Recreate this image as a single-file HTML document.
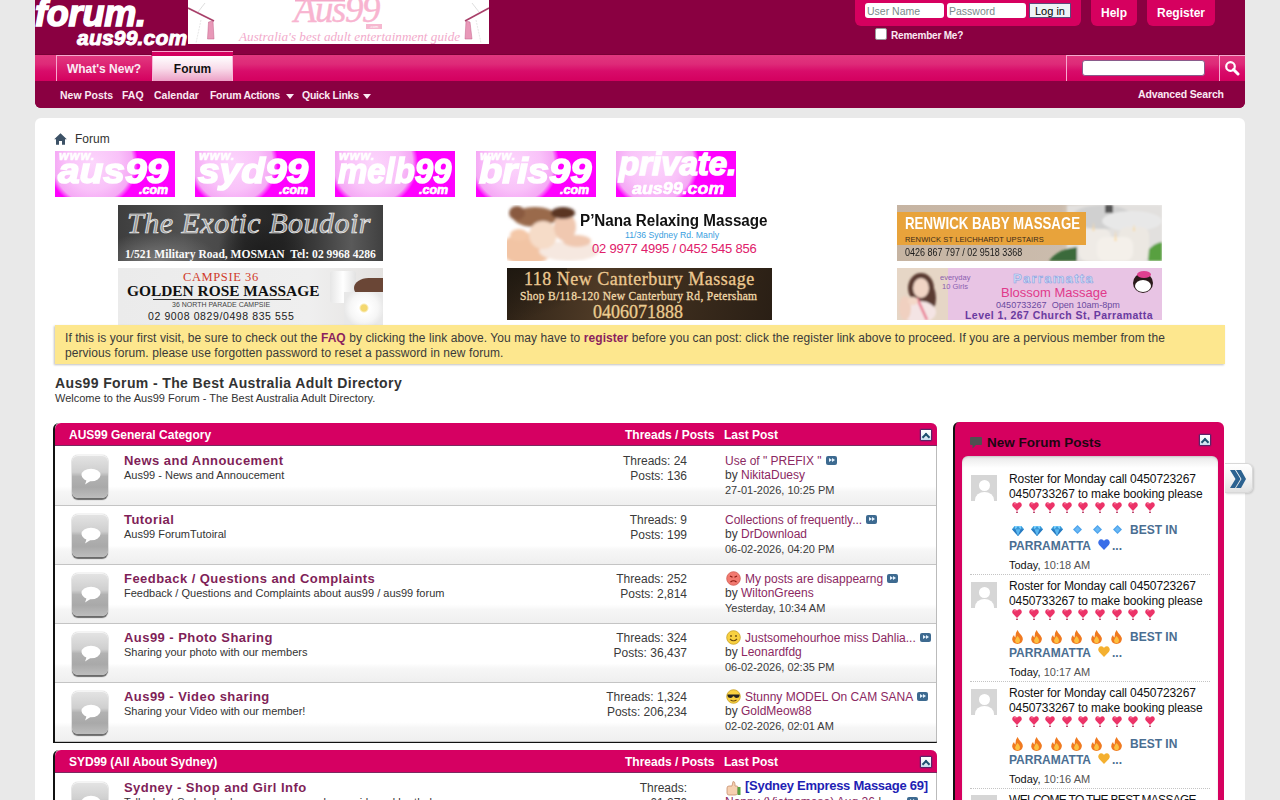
<!DOCTYPE html>
<html><head><meta charset="utf-8">
<style>
*{box-sizing:border-box;margin:0;padding:0}
html,body{width:1280px;height:800px;overflow:hidden;background:#e9e9e9;font-family:"Liberation Sans",sans-serif;color:#333}
.a{position:absolute;white-space:nowrap}
#hdr{position:absolute;left:35px;top:0;width:1210px;height:108px;background:#8a0041;border-radius:0 0 6px 6px}
#navbar{position:absolute;left:35px;top:55px;width:1210px;height:26px;background:linear-gradient(#e1377f 0%,#de2a78 35%,#d80c6a 62%,#d4005f 100%);box-shadow:0 -1px 0 #7a0036}
#sub{position:absolute;left:35px;top:81px;width:1210px;height:27px;background:#8a0041;border-radius:0 0 6px 6px}
.logo1{left:35px;top:-7px;font:italic bold 36px "Liberation Sans";color:#fff;letter-spacing:-0.2px;-webkit-text-stroke:1.6px #fff}
.logo2{left:77px;top:26px;font:italic bold 21px "Liberation Sans";color:#fff;letter-spacing:0.2px;-webkit-text-stroke:1px #fff}
#banner{position:absolute;left:188px;top:0;width:301px;height:44px;background:#fff}
.pinkbox{position:absolute;background:#d6005f;border-radius:0 0 6px 6px}
.inp{position:absolute;background:#fff;border-radius:3px;font:10.5px "Liberation Sans";color:#7a8a8a;padding:2px 0 0 2px;line-height:13px}
.hbtn{position:absolute;color:#fff;font:bold 12px "Liberation Sans";text-align:center}
.nav2{font:bold 10.5px "Liberation Sans";color:#fbe9f3}
.tri{display:inline-block;width:0;height:0;border-left:4px solid transparent;border-right:4px solid transparent;border-top:5px solid #fbe9f3;vertical-align:middle;margin-left:5px}
#content{position:absolute;left:35px;top:118px;width:1210px;height:700px;background:#fff;border-radius:6px}
.bn{position:absolute;top:151px;width:120px;height:46px;background:radial-gradient(circle 45px at 38px 12px,#fcd6fc 0%,#f9c2f9 60%,#f5a8f5 88%,#f0f 100%);overflow:hidden;color:#fff;font-family:"Liberation Sans";font-style:italic;font-weight:bold}
.bn span{position:absolute;white-space:nowrap;transform-origin:0 0}
.bn .w{left:4px;top:-2px;font-size:12.5px;letter-spacing:1px;-webkit-text-stroke:0.6px #fff}
.bn .b{left:3px;top:0px;font-size:35px;-webkit-text-stroke:1.6px #fff}
.bn .c{left:84px;top:32px;font-size:12.5px;-webkit-text-stroke:0.7px #fff}
.ad{position:absolute;width:265px;overflow:hidden}
.ad div{position:absolute;white-space:nowrap}

.cat{position:absolute;left:53px;width:884px;background:#fff;border-left:2px solid #111;border-right:1px solid #bbb;border-bottom:2px solid #111;border-radius:6px 6px 0 0;box-shadow:0 0 0 0 #000}
.cathd{position:absolute;left:55px;width:882px;height:23px;background:#d60062;border-radius:6px 6px 0 0;border-bottom:1px solid #7a2a60}
.cathd .t{position:absolute;top:5px;font:bold 12px "Liberation Sans";color:#fff}
.col{position:absolute;width:12px;height:12px;border:1px solid #5a2468;background:linear-gradient(#fff,#eef4f8 55%,#c4dcee);border-radius:1px;box-shadow:0 0 0 0.5px rgba(90,36,104,0.5)}
.col:after{content:"";position:absolute;left:0.5px;top:3px;width:4px;height:4px;border-left:2px solid #1e5070;border-top:2px solid #1e5070;transform:rotate(45deg);transform-origin:center;margin-left:1px;margin-top:1px}
.row{position:absolute;left:55px;width:881px;height:59px;background:linear-gradient(#fff 0,#fff 68%,#f6f6f6 77%,#efefef 100%);border-bottom:1px solid #c4c4c4}
.ficon{position:absolute;left:17px;top:8px;width:36px;height:43px;border-radius:6px;background:linear-gradient(#e4e4e4 0,#cfcfcf 40%,#b2b2b2 50%,#a9a9a9 75%,#bdbdbd 100%);box-shadow:inset 0 1px 0 rgba(255,255,255,0.6),0 1.5px 1px #6a6a6a,0 0 1px #888}
.ftitle{position:absolute;left:69px;top:6px;font:bold 13px "Liberation Sans";color:#7f1f58;letter-spacing:0.45px}
.fdesc{position:absolute;left:69px;top:22px;font:11px "Liberation Sans";color:#333}
.stat{position:absolute;right:249px;font:12px "Liberation Sans";color:#3a3a3a;text-align:right}
.lp{position:absolute;left:670px;font:12px "Liberation Sans";color:#3a3a3a}
.lp a{color:#8b2862;text-decoration:none}
.lp .d{font-size:11px;color:#333}
.go{display:inline-block;width:11px;height:9px;background:#3d6a90;border-radius:2px;vertical-align:0px;margin-left:4px;position:relative}
.go:before,.go:after{content:"";position:absolute;top:2px;width:0;height:0;border-top:2.5px solid transparent;border-bottom:2.5px solid transparent;border-left:3px solid #e8f4ff}
.go:before{left:3px}.go:after{left:6px}

#sb{position:absolute;left:953px;top:422px;width:271px;height:400px;background:#d6005f;border-left:2px solid #111;border-radius:6px 6px 0 0}
#sbin{position:absolute;left:962px;top:456px;width:256px;height:400px;background:linear-gradient(#e8e8e8 0,#fff 12px);border-radius:6px 6px 0 0;box-shadow:inset 0 1px 2px rgba(0,0,0,0.15)}
.av{position:absolute;left:971px;width:26px;height:26px;background:#d6d6d6;overflow:hidden}
.av:before{content:"";position:absolute;left:8px;top:5px;width:11px;height:11px;border-radius:50%;background:#fff}
.av:after{content:"";position:absolute;left:4px;top:17px;width:19px;height:16px;border-radius:50% 50% 0 0;background:#fff}
.sbt{position:absolute;left:1009px;font:12px "Liberation Sans";color:#111;letter-spacing:-0.1px;white-space:nowrap}
.sbb{position:absolute;left:1009px;font:bold 12px "Liberation Sans";color:#4a6e92;white-space:nowrap}
.sbd{position:absolute;left:1009px;font:11px "Liberation Sans";color:#111;white-space:nowrap}
.sbd span{color:#555}
.sep{position:absolute;left:970px;width:240px;height:1px;border-top:1px dotted #c4c4c4}
.emo{position:absolute}
</style></head>
<body>
<!-- HEADER -->
<div id="hdr"></div>
<div class="a logo1">forum.</div>
<div class="a logo2">aus99.com</div>
<div id="banner"><svg width="301" height="44" style="position:absolute;left:0;top:0">
<path d="M0 8 L26 21" stroke="#a8406a" stroke-width="1.6"/><path d="M10 12 L17 3" stroke="#bbb" stroke-width="0.5"/><path d="M13 20 L8 43" stroke="#ccc" stroke-width="0.5" stroke-dasharray="2 1"/><path d="M20.5 22 L25 21 L26 39 L19.5 39 Z" fill="#e898b8" stroke="#c06088" stroke-width="0.5"/>
<path d="M301 8 L277 21" stroke="#a8406a" stroke-width="1.6"/><path d="M291 12 L284 3" stroke="#bbb" stroke-width="0.5"/><path d="M288 20 L293 43" stroke="#ccc" stroke-width="0.5" stroke-dasharray="2 1"/><path d="M278 21 L282 22 L284 39 L277 39 Z" fill="#e898b8" stroke="#c06088" stroke-width="0.5"/>
<rect x="107" y="0" width="50" height="1.5" fill="#f4a8c8"/>
</svg>
<div style="position:absolute;left:106px;top:-12px;font:italic 37px 'Liberation Serif';color:#f8b4d0;letter-spacing:-1.5px;-webkit-text-stroke:0.4px #f8b4d0">Aus99</div>
<div style="position:absolute;left:178px;top:24px;width:16px;height:5px;background:#f6b8d0;font:4px 'Liberation Sans';color:#fff;text-align:center;line-height:5px">.com</div>
<div style="position:absolute;left:51px;top:29px;font:italic 13.2px 'Liberation Serif';color:#f2aacb">Australia's best adult entertainment guide</div>
</div>

<div class="pinkbox" style="left:855px;top:0;width:226px;height:26px"></div>
<div class="inp" style="left:865px;top:3px;width:79px;height:15px">User Name</div>
<div class="inp" style="left:947px;top:3px;width:79px;height:15px">Password</div>
<div class="a" style="left:1029px;top:3px;width:42px;height:15px;background:#eef2f5;border:1px solid #5a4a7a;font:11px 'Liberation Sans';color:#000;text-align:center;line-height:14px">Log in</div>
<div class="a" style="left:875px;top:28px;width:12px;height:12px;background:#fff;border:1px solid #999;border-radius:2px"></div>
<div class="a" style="left:891px;top:30px;font:bold 10px 'Liberation Sans';color:#fbe9f3;letter-spacing:-0.2px">Remember Me?</div>
<div class="pinkbox hbtn" style="left:1091px;top:0;width:46px;height:26px;line-height:26px">Help</div>
<div class="pinkbox hbtn" style="left:1147px;top:0;width:68px;height:26px;line-height:26px">Register</div>

<div id="navbar"></div>
<div id="sub"></div>
<div class="a" style="left:56px;top:55px;width:95px;height:26px;background:linear-gradient(#e2387f,#d4005f);border-top:1px solid #f7a8cf;border-left:1px solid #f7a8cf;font:bold 12px 'Liberation Sans';color:#fbeaf3;text-align:center;line-height:26px">What's New?</div>
<div class="a" style="left:152px;top:51px;width:81px;height:30px;background:#d4005f;border-top:1px solid #f7a8cf"></div>
<div class="a" style="left:152px;top:56px;width:81px;height:25px;background:linear-gradient(#fff,#f9dcea 50%,#eca0c6);font:bold 12px 'Liberation Sans';color:#111;text-align:center;line-height:26px;border-left:1px solid #f7b8d8;border-right:1px solid #f7b8d8">Forum</div>

<div class="a" style="left:1066px;top:55px;width:152px;height:26px;border-left:1px solid #f7a8cf;border-top:1px solid #f7a8cf"></div>
<div class="a" style="left:1082px;top:60px;width:123px;height:16px;background:#fff;border-radius:3px;border:1px solid #8a5a8a"></div>
<div class="a" style="left:1219px;top:55px;width:26px;height:26px;border-left:1px solid #f7a8cf;border-top:1px solid #f7a8cf"></div>
<svg class="a" style="left:1224px;top:60px" width="16" height="16" viewBox="0 0 16 16"><circle cx="6.5" cy="6.5" r="4.3" stroke="#fff" stroke-width="2.2" fill="none"/><path d="M9.5 9.5 L14 14" stroke="#fff" stroke-width="3" stroke-linecap="round"/></svg>

<div class="a nav2" style="left:60px;top:89px">New Posts</div>
<div class="a nav2" style="left:122px;top:89px">FAQ</div>
<div class="a nav2" style="left:154px;top:89px">Calendar</div>
<div class="a nav2" style="left:210px;top:89px;letter-spacing:-0.3px">Forum Actions</div><span class="a tri" style="left:281px;top:94px"></span>
<div class="a nav2" style="left:302px;top:89px;letter-spacing:-0.25px">Quick Links</div><span class="a tri" style="left:358px;top:94px"></span>
<div class="a nav2" style="left:1138px;top:88px;letter-spacing:-0.15px">Advanced Search</div>

<!-- CONTENT -->
<div id="content"></div>
<svg class="a" style="left:54px;top:133px" width="13" height="12" viewBox="0 0 13 12"><path d="M6.5 0.3 L12.8 6.2 L11 6.2 L11 11.8 L8 11.8 L8 8 L5 8 L5 11.8 L2 11.8 L2 6.2 L0.2 6.2 Z" fill="#3d5266"/></svg>
<div class="a" style="left:75px;top:132px;font:12px 'Liberation Sans';color:#333">Forum</div>

<div class="bn" style="left:55px"><span class="w">www.</span><span class="b" style="transform:scaleX(1.11)">aus99</span><span class="c">.com</span></div>
<div class="bn" style="left:195px"><span class="w">www.</span><span class="b" style="transform:scaleX(1.11)">syd99</span><span class="c">.com</span></div>
<div class="bn" style="left:335px"><span class="w">www.</span><span class="b" style="transform:scaleX(0.94)">melb99</span><span class="c">.com</span></div>
<div class="bn" style="left:476px"><span class="w">www.</span><span class="b" style="transform:scaleX(1.09)">bris99</span><span class="c">.com</span></div>
<div class="bn" style="left:616px"><span class="b" style="top:-6px;left:3px;font-size:33px;transform:scaleX(1.0)">private.</span><span class="c" style="top:28px;left:16px;font-size:17px;transform:scaleX(1.05)">aus99.com</span></div>

<!-- ADS -->
<div class="ad" style="left:118px;top:205px;height:56px;background:radial-gradient(ellipse 60px 30px at 40px 56px,#7a7a7a,rgba(90,90,90,0) 100%),linear-gradient(90deg,#3e3e3e 0%,#505050 25%,#4a4a4a 38%,#2c2c2c 48%,#262626 62%,#3a3a3a 74%,#5a5a5a 88%,#404040 100%)">
 <div style="left:100px;top:10px;width:90px;height:46px;background:radial-gradient(ellipse 45px 30px at 45px 35px,#1e1e1e,rgba(30,30,30,0) 100%)"></div>
 <div style="left:9px;top:1px;font:italic 30px 'Liberation Serif';color:rgba(220,220,220,0.55);letter-spacing:0.5px;-webkit-text-stroke:0.7px #f0f0f0">The Exotic Boudoir</div>
 <div style="left:7px;top:43px;font:bold 11.6px 'Liberation Serif';color:#fafafa">1/521 Military Road, MOSMAN&nbsp; Tel: 02 9968 4286</div>
</div>
<div class="ad" style="left:507px;top:205px;height:56px;background:#fff">
 <svg style="position:absolute;left:0;top:0" width="100" height="56"><defs><filter id="bl" x="-20%" y="-20%" width="140%" height="140%"><feGaussianBlur stdDeviation="1.6"/></filter></defs>
 <g filter="url(#bl)">
 <ellipse cx="20" cy="44" rx="26" ry="16" fill="#f2c4a4"/>
 <ellipse cx="62" cy="46" rx="30" ry="10" fill="#f6e8e0"/>
 <ellipse cx="70" cy="36" rx="14" ry="6" fill="#f0c8b0"/>
 <ellipse cx="28" cy="12" rx="22" ry="10" fill="#9a6a4c"/>
 <ellipse cx="10" cy="8" rx="8" ry="7" fill="#8a5a40"/>
 <ellipse cx="36" cy="30" rx="14" ry="14" fill="#f6dcc8"/>
 <ellipse cx="58" cy="22" rx="11" ry="14" fill="#f0c8b0"/>
 <ellipse cx="56" cy="8" rx="12" ry="6" fill="#5a3424"/>
 <ellipse cx="12" cy="30" rx="9" ry="6" fill="#f4c8a8"/>
 </g></svg>
 <div style="left:73px;top:7px;font:bold 16px 'Liberation Sans';color:#111;transform:scaleX(0.95);transform-origin:0 0">P&#8217;Nana Relaxing Massage</div>
 <div style="left:118px;top:25px;font:8.7px 'Liberation Sans';color:#3aa0e0">11/36 Sydney Rd. Manly</div>
 <div style="left:85px;top:36px;font:13px 'Liberation Sans';color:#e0206a;letter-spacing:-0.2px">02 9977 4995 / 0452 545 856</div>
</div>
<div class="ad" style="left:897px;top:205px;height:56px;background:linear-gradient(90deg,#c6b4a2 0,#cbbcad 62%,#e8e4e0 74%,#f0eeec 100%)">
 <svg style="position:absolute;left:0;top:0" width="265" height="56"><defs><filter id="bl3" x="-20%" y="-20%" width="140%" height="140%"><feGaussianBlur stdDeviation="1"/></filter></defs>
 <g filter="url(#bl3)">
 <rect x="170" y="0" width="95" height="56" fill="#e2e0de"/>
 <ellipse cx="205" cy="12" rx="30" ry="12" fill="#d0d0d0"/>
 <rect x="208" y="0" width="8" height="8" fill="#555"/>
 <ellipse cx="235" cy="16" rx="30" ry="10" fill="#e8e8e8"/>
 <path d="M152 56 Q160 44 180 42 L180 56 Z" fill="#3a6a3a"/>
 <rect x="182" y="24" width="32" height="32" rx="8" fill="#efebe6"/>
 <rect x="222" y="22" width="30" height="34" rx="8" fill="#ece8e2"/>
 <rect x="200" y="32" width="36" height="24" rx="8" fill="#f4f0ea"/>
 <path d="M251 56 L252 44 Q258 38 265 37 L265 56 Z" fill="#58a040"/>
 <path d="M195.5 26 L196.5 17 L197.5 26 Z" fill="#f8d8a0"/>
 <path d="M217.5 36 L218.5 25 L219.5 36 Z" fill="#f8d8a0"/>
 <path d="M236 26 L237 19 L238 26 Z" fill="#f8d8a0"/>
 </g></svg>
 <div style="left:0;top:7px;width:189px;height:33px;background:#e8a33b"></div>
 <div style="left:8px;top:9px;font:bold 17px 'Liberation Sans';color:#fff;transform:scaleX(0.78);transform-origin:0 0">RENWICK BABY MASSAGE</div>
 <div style="left:8px;top:30px;font:7.5px 'Liberation Sans';color:#3a2a1a;letter-spacing:0.1px">RENWICK ST LEICHHARDT UPSTAIRS</div>
 <div style="left:8px;top:41px;font:11.5px 'Liberation Sans';color:#1a1a1a;transform:scaleX(0.78);transform-origin:0 0">0426 867 797 / 02 9518 3368</div>
</div>
<div class="ad" style="left:118px;top:268px;height:57px;background:linear-gradient(90deg,#ebebeb,#efefef 72%,#e4e2e0)">
 <div style="left:212px;top:3px;width:26px;height:32px;background:linear-gradient(90deg,#e6e6e6,#fff 50%,#e2e2e2);border-radius:3px"></div>
 <div style="left:236px;top:10px;width:29px;height:20px;background:#6a4636;border-radius:50% 0 0 50%"></div>
 <div style="left:226px;top:24px;width:39px;height:33px;background:radial-gradient(circle at 20px 16px,#f4d870 0,#f4d870 3px,#fff 5px,#f6f6f6 14px,#e8e8e8 20px)"></div>
 <div style="left:65px;top:2px;font:12.5px 'Liberation Serif';color:#d03a2a;letter-spacing:0.6px">CAMPSIE 36</div>
 <div style="left:9px;top:14px;font:bold 15.4px 'Liberation Serif';color:#111">GOLDEN ROSE MASSAGE</div>
 <div style="left:35px;top:31px;width:138px;height:1px;background:#333"></div>
 <div style="left:54px;top:33px;font:7px 'Liberation Sans';color:#444">36 NORTH PARADE CAMPSIE</div>
 <div style="left:30px;top:42px;font:10.5px 'Liberation Sans';color:#222;letter-spacing:0.6px">02 9008 0829/0498 835 555</div>
</div>
<div class="ad" style="left:507px;top:268px;height:52px;background:linear-gradient(100deg,#2e2216,#4e3a26 35%,#3e2e1e 60%,#2a1f15)">
 <div style="left:0;top:0;width:60px;height:52px;background:linear-gradient(160deg,#1e1810,rgba(30,24,16,0) 80%)"></div>
 <div style="left:17px;top:1px;font:18px 'Liberation Serif';color:#ecc890;letter-spacing:0.5px;-webkit-text-stroke:0.3px #ecc890">118 New Canterbury Massage</div>
 <div style="left:13px;top:22px;font:11.5px 'Liberation Serif';color:#f0d8a8;letter-spacing:0.3px;-webkit-text-stroke:0.3px #f0d8a8">Shop B/118-120 New Canterbury Rd, Petersham</div>
 <div style="left:86px;top:34px;font:18px 'Liberation Serif';color:#eccc90;-webkit-text-stroke:0.3px #eccc90">0406071888</div>
</div>
<div class="ad" style="left:897px;top:268px;height:52px;background:#e8c4e4">
 <svg style="position:absolute;left:0;top:0" width="51" height="52"><defs><filter id="bl2" x="-20%" y="-20%" width="140%" height="140%"><feGaussianBlur stdDeviation="1.2"/></filter></defs>
 <rect width="51" height="52" fill="#e6d6c6"/>
 <g filter="url(#bl2)">
 <ellipse cx="24" cy="20" rx="13" ry="15" fill="#5a3a32"/>
 <ellipse cx="34" cy="30" rx="5" ry="12" fill="#5a3a32"/>
 <ellipse cx="24" cy="20" rx="8" ry="10" fill="#f0d4c4"/>
 <ellipse cx="22" cy="44" rx="17" ry="11" fill="#f4e4e4"/>
 <ellipse cx="8" cy="40" rx="6" ry="12" fill="#f0d0c0"/>
 <path d="M20 30 L30 52" stroke="#e87890" stroke-width="2.5"/>
 <ellipse cx="16" cy="33" rx="5" ry="4" fill="#f4d8c8"/>
 </g></svg>
 <div style="left:43px;top:5px;font:7.5px 'Liberation Sans';color:#8a60b0;line-height:9px">everyday<br>&nbsp;10 Girls</div>
 <div style="left:116px;top:3px;font:bold 13px 'Liberation Sans';color:#d4e4f8;-webkit-text-stroke:0.6px #8aa0e0;letter-spacing:1.3px">Parramatta</div>
 <div style="left:104px;top:17px;font:13px 'Liberation Sans';color:#e03a8a">Blossom Massage</div>
 <div style="left:99px;top:32px;font:9.1px 'Liberation Sans';color:#6a4aa0">0450733267&nbsp; Open 10am-8pm</div>
 <div style="left:68px;top:41px;font:bold 10.5px 'Liberation Sans';color:#6a3aa0;letter-spacing:0.45px">Level 1, 267 Church St, Parramatta</div>
 <div style="left:236px;top:5px;width:20px;height:20px;background:#2a1a1a;border-radius:50%"></div>
 <div style="left:238px;top:12px;width:16px;height:12px;background:#fff;border-radius:50%"></div>
 <div style="left:240px;top:3px;width:14px;height:7px;background:#e04090;border-radius:50%"></div>
</div>

<!-- NOTICE -->
<div class="a" style="left:55px;top:325px;width:1170px;height:39px;background:#fde78e;box-shadow:-1px 1px 2px rgba(0,0,0,0.25)"></div>
<div class="a" style="left:65px;top:331px;font:12px 'Liberation Sans';color:#3a3a3a;line-height:15px;letter-spacing:0.07px;white-space:normal;width:1150px">If this is your first visit, be sure to check out the <b style="color:#8b1f5e">FAQ</b> by clicking the link above. You may have to <b style="color:#8b1f5e">register</b> before you can post: click the register link above to proceed. If you are a pervious member from the<br>pervious forum. please use forgotten password to reset a password in new forum.</div>

<div class="a" style="left:55px;top:375px;font:bold 14px 'Liberation Sans';color:#333;letter-spacing:0.38px">Aus99 Forum - The Best Australia Adult Directory</div>
<div class="a" style="left:55px;top:392px;font:11px 'Liberation Sans';color:#333">Welcome to the Aus99 Forum - The Best Australia Adult Directory.</div>
<div class="cat" style="top:423px;height:320px"></div>
<div class="cathd" style="top:423px"><span class="t" style="left:14px">AUS99 General Category</span><span class="t" style="left:570px">Threads / Posts</span><span class="t" style="left:669px">Last Post</span><span class="col" style="left:865px;top:6px"></span></div>
<div class="row" style="top:447px">
 <div class="ficon"><svg style="position:absolute;left:9px;top:13px" width="20" height="17" viewBox="0 0 20 17"><ellipse cx="10" cy="7" rx="9.5" ry="6.3" fill="#fff"/><path d="M6 11 L4 16.5 L11 12 Z" fill="#fff"/></svg></div>
 <div class="ftitle">News and Annoucement</div><div class="fdesc">Aus99 - News and Annoucement</div>
 <div class="stat" style="top:7px">Threads: 24</div><div class="stat" style="top:22px">Posts: 136</div>
 <div class="lp" style="top:7px"><span style="position:relative;left:0px"><a>Use of &quot; PREFIX &quot;</a><span class="go"></span></span></div>
 <div class="lp" style="top:21px">by <a>NikitaDuesy</a></div>
 <div class="lp d" style="top:37px;font-size:11px">27-01-2026, 10:25 PM</div>
</div>
<div class="row" style="top:506px">
 <div class="ficon"><svg style="position:absolute;left:9px;top:13px" width="20" height="17" viewBox="0 0 20 17"><ellipse cx="10" cy="7" rx="9.5" ry="6.3" fill="#fff"/><path d="M6 11 L4 16.5 L11 12 Z" fill="#fff"/></svg></div>
 <div class="ftitle">Tutorial</div><div class="fdesc">Aus99 ForumTutoiral</div>
 <div class="stat" style="top:7px">Threads: 9</div><div class="stat" style="top:22px">Posts: 199</div>
 <div class="lp" style="top:7px"><span style="position:relative;left:0px"><a>Collections of frequently...</a><span class="go"></span></span></div>
 <div class="lp" style="top:21px">by <a>DrDownload</a></div>
 <div class="lp d" style="top:37px;font-size:11px">06-02-2026, 04:20 PM</div>
</div>
<div class="row" style="top:565px">
 <div class="ficon"><svg style="position:absolute;left:9px;top:13px" width="20" height="17" viewBox="0 0 20 17"><ellipse cx="10" cy="7" rx="9.5" ry="6.3" fill="#fff"/><path d="M6 11 L4 16.5 L11 12 Z" fill="#fff"/></svg></div>
 <div class="ftitle">Feedback / Questions and Complaints</div><div class="fdesc">Feedback / Questions and Complaints about aus99 / aus99 forum</div>
 <div class="stat" style="top:7px">Threads: 252</div><div class="stat" style="top:22px">Posts: 2,814</div>
 <div class="lp" style="top:7px"><span style="position:relative;left:20px"><svg style="position:absolute;left:-19px;top:-1px" width="15" height="15" viewBox="0 0 15 15"><circle cx="7.5" cy="7.5" r="6.8" fill="#f27a70" stroke="#d05a50" stroke-width="0.8"/><path d="M4 5 L6.5 6.2 M11 5 L8.5 6.2" stroke="#8a1a10" stroke-width="1.2"/><path d="M4.5 11 Q7.5 8.5 10.5 11" stroke="#8a1a10" stroke-width="1.1" fill="none"/></svg><a>My posts are disappearng</a><span class="go"></span></span></div>
 <div class="lp" style="top:21px">by <a>WiltonGreens</a></div>
 <div class="lp d" style="top:37px;font-size:11px">Yesterday, 10:34 AM</div>
</div>
<div class="row" style="top:624px">
 <div class="ficon"><svg style="position:absolute;left:9px;top:13px" width="20" height="17" viewBox="0 0 20 17"><ellipse cx="10" cy="7" rx="9.5" ry="6.3" fill="#fff"/><path d="M6 11 L4 16.5 L11 12 Z" fill="#fff"/></svg></div>
 <div class="ftitle">Aus99 - Photo Sharing</div><div class="fdesc">Sharing your photo with our members</div>
 <div class="stat" style="top:7px">Threads: 324</div><div class="stat" style="top:22px">Posts: 36,437</div>
 <div class="lp" style="top:7px"><span style="position:relative;left:20px"><svg style="position:absolute;left:-19px;top:-1px" width="15" height="15" viewBox="0 0 15 15"><circle cx="7.5" cy="7.5" r="6.8" fill="#f8d040" stroke="#c8a020" stroke-width="0.8"/><circle cx="5" cy="6" r="0.9" fill="#6a4a10"/><circle cx="10" cy="6" r="0.9" fill="#6a4a10"/><path d="M4 9 Q7.5 12.5 11 9" stroke="#6a4a10" stroke-width="1.1" fill="none"/></svg><a>Justsomehourhoe miss Dahlia...</a><span class="go"></span></span></div>
 <div class="lp" style="top:21px">by <a>Leonardfdg</a></div>
 <div class="lp d" style="top:37px;font-size:11px">06-02-2026, 02:35 PM</div>
</div>
<div class="row" style="top:683px">
 <div class="ficon"><svg style="position:absolute;left:9px;top:13px" width="20" height="17" viewBox="0 0 20 17"><ellipse cx="10" cy="7" rx="9.5" ry="6.3" fill="#fff"/><path d="M6 11 L4 16.5 L11 12 Z" fill="#fff"/></svg></div>
 <div class="ftitle">Aus99 - Video sharing</div><div class="fdesc">Sharing your Video with our member!</div>
 <div class="stat" style="top:7px">Threads: 1,324</div><div class="stat" style="top:22px">Posts: 206,234</div>
 <div class="lp" style="top:7px"><span style="position:relative;left:20px"><svg style="position:absolute;left:-19px;top:-1px" width="15" height="15" viewBox="0 0 15 15"><circle cx="7.5" cy="7.5" r="6.8" fill="#f8d040" stroke="#c8a020" stroke-width="0.8"/><path d="M1.5 5.5 H13.5 V7 Q13 9 10.5 9 Q8.5 9 8 7.2 H7 Q6.5 9 4.5 9 Q2 9 1.5 7 Z" fill="#222"/><path d="M4.5 11 Q7.5 13 10.5 11" stroke="#6a4a10" stroke-width="1.1" fill="none"/></svg><a>Stunny MODEL On CAM SANA</a><span class="go"></span></span></div>
 <div class="lp" style="top:21px">by <a>GoldMeow88</a></div>
 <div class="lp d" style="top:37px;font-size:11px">02-02-2026, 02:01 AM</div>
</div>
<div class="cat" style="top:750px;height:80px"></div>
<div class="cathd" style="top:750px"><span class="t" style="left:14px">SYD99 (All About Sydney)</span><span class="t" style="left:570px">Threads / Posts</span><span class="t" style="left:669px">Last Post</span><span class="col" style="left:865px;top:6px"></span></div>
<div class="row" style="top:774px">
 <div class="ficon"><svg style="position:absolute;left:9px;top:13px" width="20" height="17" viewBox="0 0 20 17"><ellipse cx="10" cy="7" rx="9.5" ry="6.3" fill="#fff"/><path d="M6 11 L4 16.5 L11 12 Z" fill="#fff"/></svg></div>
 <div class="ftitle">Sydney - Shop and Girl Info</div><div class="fdesc">Talk about Sydney's shops, massage parlours, girls and brothels</div>
 <div class="stat" style="top:7px">Threads:</div><div class="stat" style="top:22px">61,276</div>
 <div class="lp" style="top:4px"><svg style="position:absolute;left:0;top:2px" width="16" height="16" viewBox="0 0 16 16"><path d="M2 8 Q2 6 4 6 L7 6 L8 1.5 Q10 1.5 10 4 L10 6 L12 6 Q13 6 13 8 L12.5 13.5 Q12 15 10 15 L4 15 Q2 15 2 13 Z" fill="#f6d0b0" stroke="#c89070" stroke-width="0.8"/><rect x="12.5" y="7" width="3" height="8" fill="#5aa040"/></svg><span style="position:relative;left:20px;font:bold 13px 'Liberation Sans';color:#1e22b4;letter-spacing:-0.27px">[Sydney Empress Massage 69]</span></div>
 <div class="lp" style="top:21px"><a>Nanny (Vietnamese) Aug 26</a> | <a>...</a><span class="go" style="margin-left:12px"></span></div>
</div>
<svg width="0" height="0" style="position:absolute"><defs>
<symbol id="hrt" viewBox="0 0 10 11"><path d="M5 9 L1 4.8 Q-0.3 3.2 0.6 1.6 Q1.8 -0.2 3.6 0.6 Q4.5 1 5 1.8 Q5.5 1 6.4 0.6 Q8.2 -0.2 9.4 1.6 Q10.3 3.2 9 4.8 Z" fill="#ec3368"/><path d="M2 2 Q3 1.2 4 2" stroke="#ff8aa8" stroke-width="0.8" fill="none"/><rect x="4.2" y="9.6" width="1.6" height="1.4" fill="#b02050"/></symbol>
<symbol id="gem" viewBox="0 0 12 10"><path d="M2.5 0 H9.5 L12 3.2 L6 10 L0 3.2 Z" fill="#3a9ad8"/><path d="M0 3.2 H12 L6 10 Z" fill="#2a7ac0"/><path d="M3.5 3.2 L6 10 L8.5 3.2 Z" fill="#5ab8f0"/><path d="M2.5 0 L3.5 3.2 L6 0 L8.5 3.2 L9.5 0 Z" fill="#7ad0ff"/></symbol>
<symbol id="dia" viewBox="0 0 10 10"><path d="M5 0 L10 5 L5 10 L0 5 Z" fill="#4ea4ec"/><path d="M5 2 L8 5 L5 8 L2 5 Z" fill="#6ab8f4"/></symbol>
<symbol id="fire" viewBox="0 0 11 14"><path d="M5.5 0 Q7 3 9.5 5.5 Q11 7.5 10.8 9.5 Q10.3 13.5 5.5 14 Q0.7 13.5 0.2 9.5 Q0 7 2 5 Q2.5 7 3.5 7.5 Q3.2 3 5.5 0 Z" fill="#f07a20"/><path d="M5.5 6 Q7.5 8 8 10 Q8 13 5.5 13.2 Q3 13 3 10.5 Q3.5 8.5 5.5 6 Z" fill="#fcc040"/></symbol>
<symbol id="bhrt" viewBox="0 0 12 11"><path d="M6 11 L1.2 6 Q-0.5 3.8 0.8 1.8 Q2.2 -0.2 4.3 0.6 Q5.4 1 6 2 Q6.6 1 7.7 0.6 Q9.8 -0.2 11.2 1.8 Q12.5 3.8 10.8 6 Z" fill="#3a6ee8"/></symbol>
<symbol id="yhrt" viewBox="0 0 12 11"><path d="M6 11 L1.2 6 Q-0.5 3.8 0.8 1.8 Q2.2 -0.2 4.3 0.6 Q5.4 1 6 2 Q6.6 1 7.7 0.6 Q9.8 -0.2 11.2 1.8 Q12.5 3.8 10.8 6 Z" fill="#f4b030"/></symbol>
</defs></svg>
<div id="sb"></div>
<svg class="emo" style="left:970px;top:437px" width="12" height="12" viewBox="0 0 12 12"><path d="M1 0 H11 Q12 0 12 1 V7 Q12 8 11 8 H6 L2.5 11.5 V8 H1 Q0 8 0 7 V1 Q0 0 1 0 Z" fill="#505050"/></svg>
<div class="a" style="left:987px;top:435px;font:bold 13.5px 'Liberation Sans';color:#1e0612">New Forum Posts</div>
<span class="col" style="left:1199px;top:434px"></span>
<div id="sbin"></div>
<div class="a" style="left:1225px;top:463px;width:28px;height:30px;background:linear-gradient(#fff,#f4f4f4 50%,#e2e2e2);border:1px solid #d8d8d8;border-left:none;border-radius:0 6px 6px 0;box-shadow:1px 1px 2px rgba(0,0,0,0.15)"></div>
<svg class="emo" style="left:1229px;top:470px" width="17" height="18" viewBox="0 0 17 18"><path d="M1 0 H6 L11.5 9 L6 18 H1 L6.5 9 Z" fill="#2c6290"/><path d="M7 0 H12 L17 9 L12 18 H7 L12.5 9 Z" fill="#2c6290"/></svg>
<div class="av" style="top:475px"></div>
<div class="sbt" style="top:472px">Roster for Monday call 0450723267</div>
<div class="sbt" style="top:486.5px">0450733267 to make booking please</div>
<svg class="emo" style="left:1012.0px;top:502px" width="10" height="11"><use href="#hrt"/></svg><svg class="emo" style="left:1028.6px;top:502px" width="10" height="11"><use href="#hrt"/></svg><svg class="emo" style="left:1045.2px;top:502px" width="10" height="11"><use href="#hrt"/></svg><svg class="emo" style="left:1061.8px;top:502px" width="10" height="11"><use href="#hrt"/></svg><svg class="emo" style="left:1078.4px;top:502px" width="10" height="11"><use href="#hrt"/></svg><svg class="emo" style="left:1095.0px;top:502px" width="10" height="11"><use href="#hrt"/></svg><svg class="emo" style="left:1111.6px;top:502px" width="10" height="11"><use href="#hrt"/></svg><svg class="emo" style="left:1128.2px;top:502px" width="10" height="11"><use href="#hrt"/></svg><svg class="emo" style="left:1144.8px;top:502px" width="10" height="11"><use href="#hrt"/></svg>
<svg class="emo" style="left:1011.5px;top:526px" width="12" height="10"><use href="#gem"/></svg><svg class="emo" style="left:1031.4px;top:526px" width="12" height="10"><use href="#gem"/></svg><svg class="emo" style="left:1051.3px;top:526px" width="12" height="10"><use href="#gem"/></svg><svg class="emo" style="left:1073.0px;top:525px" width="9" height="9"><use href="#dia"/></svg><svg class="emo" style="left:1092.9px;top:525px" width="9" height="9"><use href="#dia"/></svg><svg class="emo" style="left:1112.8px;top:525px" width="9" height="9"><use href="#dia"/></svg><div class="sbb" style="top:522.5px;left:1130px">BEST IN</div>
<div class="sbb" style="top:538.5px">PARRAMATTA</div>
<svg class="emo" style="left:1098px;top:539px" width="12" height="11"><use href="#bhrt"/></svg><div class="sbb" style="top:538.5px;left:1112px">...</div>
<div class="sbd" style="top:558.5px">Today, <span>10:18 AM</span></div>
<div class="sep" style="top:574px"></div>
<div class="av" style="top:582px"></div>
<div class="sbt" style="top:579px">Roster for Monday call 0450723267</div>
<div class="sbt" style="top:593.5px">0450733267 to make booking please</div>
<svg class="emo" style="left:1012.0px;top:609px" width="10" height="11"><use href="#hrt"/></svg><svg class="emo" style="left:1028.6px;top:609px" width="10" height="11"><use href="#hrt"/></svg><svg class="emo" style="left:1045.2px;top:609px" width="10" height="11"><use href="#hrt"/></svg><svg class="emo" style="left:1061.8px;top:609px" width="10" height="11"><use href="#hrt"/></svg><svg class="emo" style="left:1078.4px;top:609px" width="10" height="11"><use href="#hrt"/></svg><svg class="emo" style="left:1095.0px;top:609px" width="10" height="11"><use href="#hrt"/></svg><svg class="emo" style="left:1111.6px;top:609px" width="10" height="11"><use href="#hrt"/></svg><svg class="emo" style="left:1128.2px;top:609px" width="10" height="11"><use href="#hrt"/></svg><svg class="emo" style="left:1144.8px;top:609px" width="10" height="11"><use href="#hrt"/></svg>
<svg class="emo" style="left:1011.5px;top:630px" width="11" height="14"><use href="#fire"/></svg><svg class="emo" style="left:1031.4px;top:630px" width="11" height="14"><use href="#fire"/></svg><svg class="emo" style="left:1051.3px;top:630px" width="11" height="14"><use href="#fire"/></svg><svg class="emo" style="left:1071.2px;top:630px" width="11" height="14"><use href="#fire"/></svg><svg class="emo" style="left:1091.1px;top:630px" width="11" height="14"><use href="#fire"/></svg><svg class="emo" style="left:1111.0px;top:630px" width="11" height="14"><use href="#fire"/></svg><div class="sbb" style="top:629.5px;left:1130px">BEST IN</div>
<div class="sbb" style="top:645.5px">PARRAMATTA</div>
<svg class="emo" style="left:1098px;top:646px" width="12" height="11"><use href="#yhrt"/></svg><div class="sbb" style="top:645.5px;left:1112px">...</div>
<div class="sbd" style="top:665.5px">Today, <span>10:17 AM</span></div>
<div class="sep" style="top:681px"></div>
<div class="av" style="top:689px"></div>
<div class="sbt" style="top:686px">Roster for Monday call 0450723267</div>
<div class="sbt" style="top:700.5px">0450733267 to make booking please</div>
<svg class="emo" style="left:1012.0px;top:716px" width="10" height="11"><use href="#hrt"/></svg><svg class="emo" style="left:1028.6px;top:716px" width="10" height="11"><use href="#hrt"/></svg><svg class="emo" style="left:1045.2px;top:716px" width="10" height="11"><use href="#hrt"/></svg><svg class="emo" style="left:1061.8px;top:716px" width="10" height="11"><use href="#hrt"/></svg><svg class="emo" style="left:1078.4px;top:716px" width="10" height="11"><use href="#hrt"/></svg><svg class="emo" style="left:1095.0px;top:716px" width="10" height="11"><use href="#hrt"/></svg><svg class="emo" style="left:1111.6px;top:716px" width="10" height="11"><use href="#hrt"/></svg><svg class="emo" style="left:1128.2px;top:716px" width="10" height="11"><use href="#hrt"/></svg><svg class="emo" style="left:1144.8px;top:716px" width="10" height="11"><use href="#hrt"/></svg>
<svg class="emo" style="left:1011.5px;top:737px" width="11" height="14"><use href="#fire"/></svg><svg class="emo" style="left:1031.4px;top:737px" width="11" height="14"><use href="#fire"/></svg><svg class="emo" style="left:1051.3px;top:737px" width="11" height="14"><use href="#fire"/></svg><svg class="emo" style="left:1071.2px;top:737px" width="11" height="14"><use href="#fire"/></svg><svg class="emo" style="left:1091.1px;top:737px" width="11" height="14"><use href="#fire"/></svg><svg class="emo" style="left:1111.0px;top:737px" width="11" height="14"><use href="#fire"/></svg><div class="sbb" style="top:736.5px;left:1130px">BEST IN</div>
<div class="sbb" style="top:752.5px">PARRAMATTA</div>
<svg class="emo" style="left:1098px;top:753px" width="12" height="11"><use href="#yhrt"/></svg><div class="sbb" style="top:752.5px;left:1112px">...</div>
<div class="sbd" style="top:772.5px">Today, <span>10:16 AM</span></div>
<div class="sep" style="top:788px"></div>
<div class="av" style="top:795px"></div>
<div class="sbt" style="top:793px;letter-spacing:-0.7px">WELCOME TO THE BEST MASSAGE</div>
</body></html>
